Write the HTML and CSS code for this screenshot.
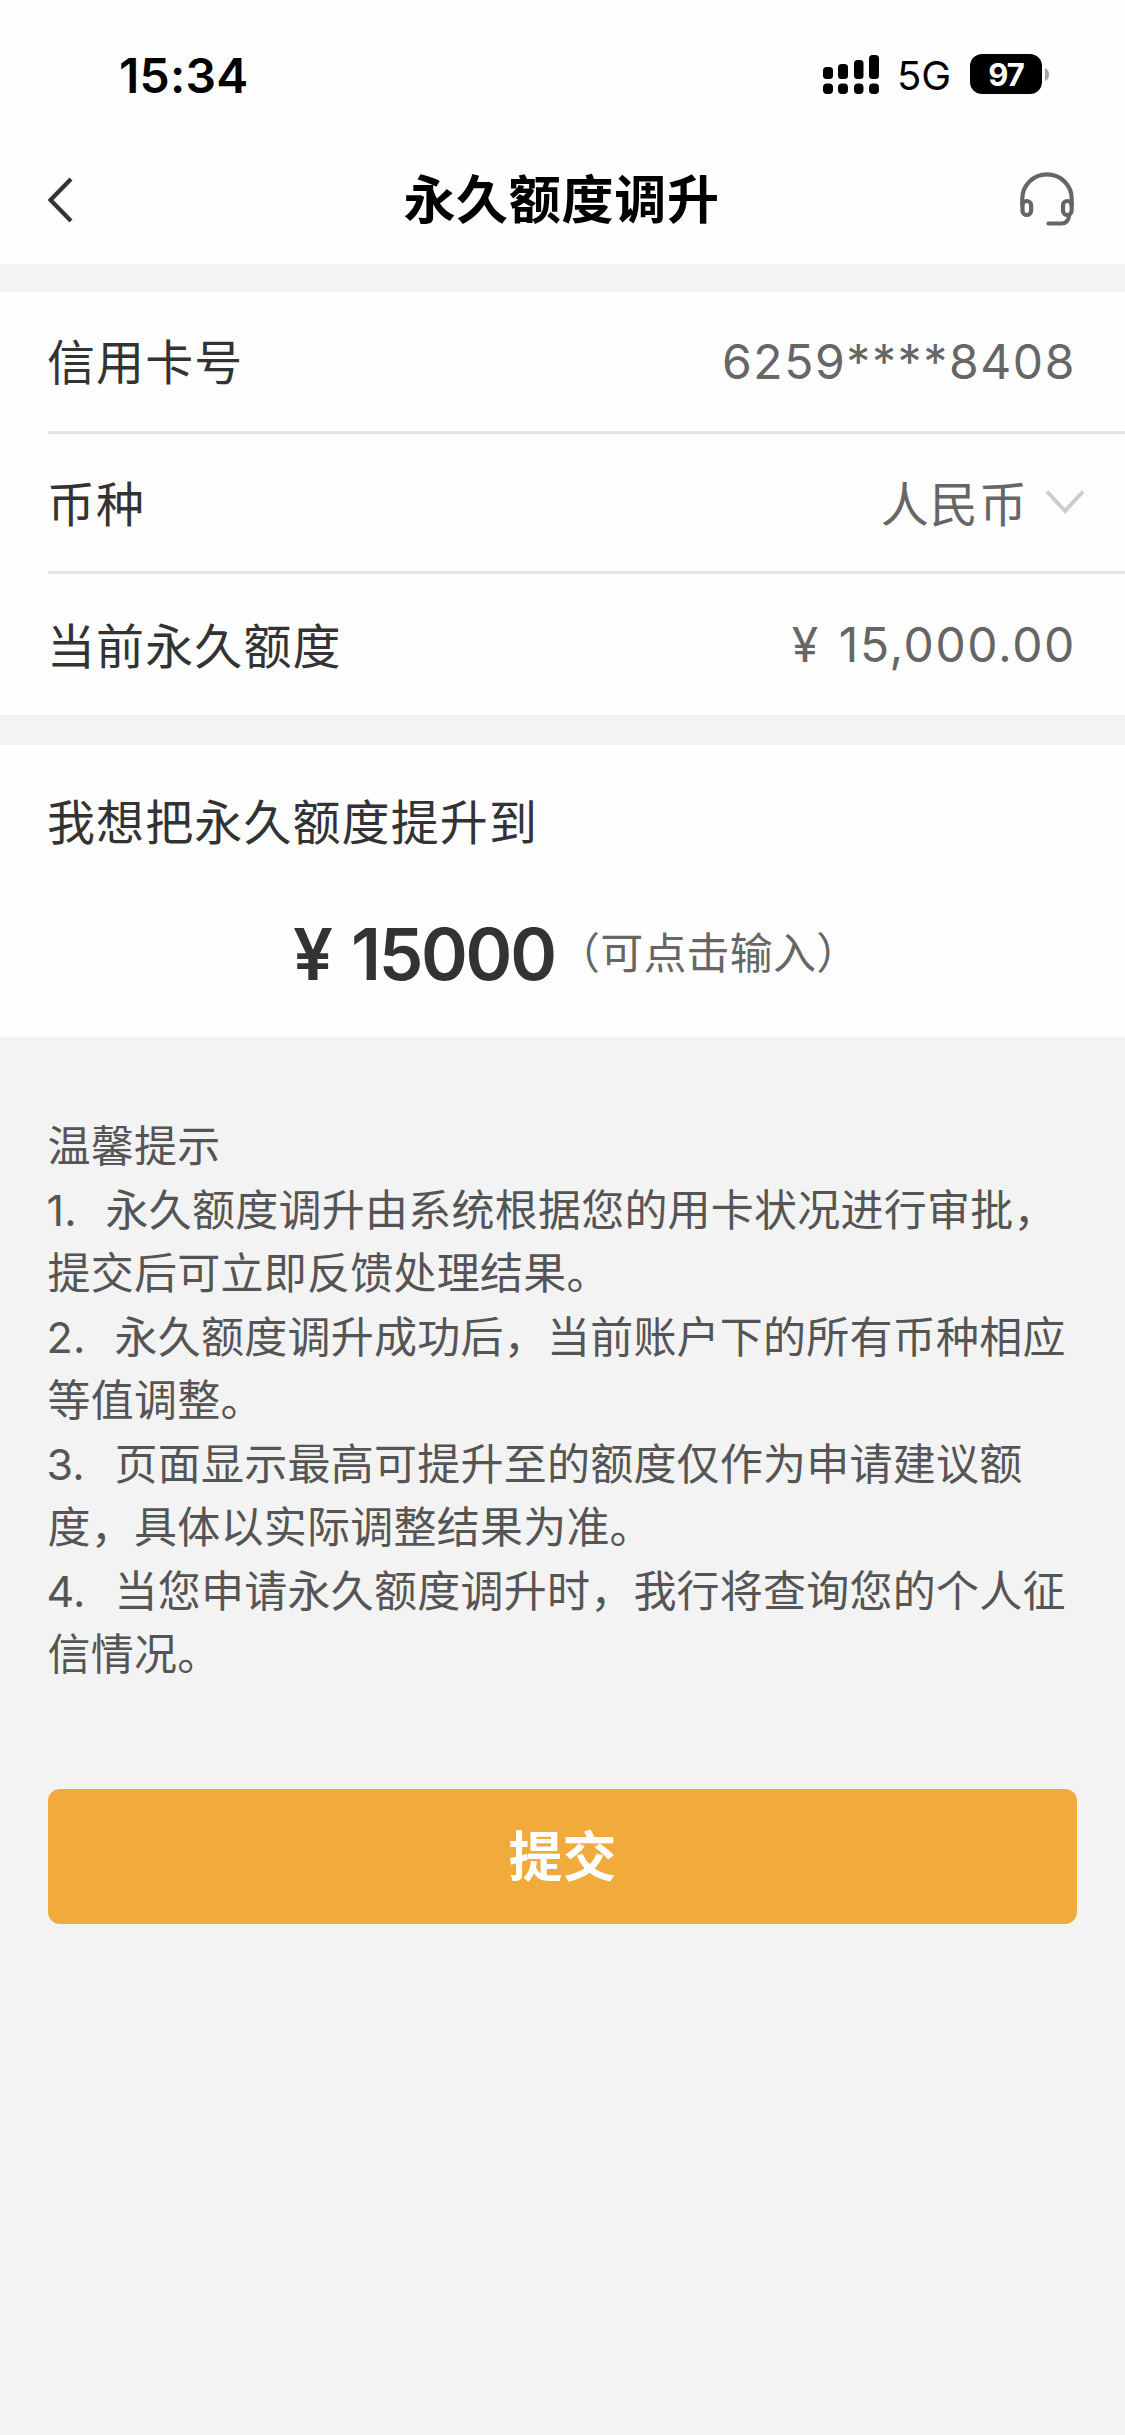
FILE: index.html
```html
<!DOCTYPE html>
<html lang="zh-CN">
<head>
<meta charset="utf-8">
<title>永久额度调升</title>
<link rel="stylesheet" href="styles.css">
</head>
<body>
<div class="status">
  <span class="time">15:34</span>
  <svg class="signal" width="56" height="40" viewBox="0 0 56 40">
    <rect x="0" y="13" width="10" height="12" rx="3.5"/><rect x="15" y="10" width="10" height="15" rx="3.5"/><rect x="31" y="6" width="9.5" height="19" rx="3.5"/><rect x="46" y="1" width="10" height="24" rx="3.5"/>
    <rect x="0" y="29.5" width="10" height="10.5" rx="4"/><rect x="15" y="29.5" width="10" height="10.5" rx="4"/><rect x="31" y="29.5" width="9.5" height="10.5" rx="4"/><rect x="46" y="29.5" width="10" height="10.5" rx="4"/>
  </svg>
  <span class="network">5G</span>
  <span class="battery">97</span>
  <svg class="nub" width="4" height="13" viewBox="0 0 4 13"><path d="M0 0Q4 1.5 4 6.5T0 13Z"/></svg>
</div>
<header class="nav">
  <svg class="back" width="26" height="46" viewBox="0 0 26 46"><path d="M24 2 3.5 23 24 44"/></svg>
  <h1 class="title">永久额度调升</h1>
  <svg class="service" width="54" height="54" viewBox="0 0 54 54">
    <path d="M2.3 33V26.5a24.7 24.2 0 0 1 49.4 0V33"/>
    <rect x="2.5" y="29" width="8.6" height="14" rx="4.3"/>
    <rect x="43" y="29" width="8.6" height="14" rx="4.3"/>
    <path d="M49 43C49 48.500 46 51.500 41.500 51.500H28.500"/>
  </svg>
</header>
<section class="list">
  <div class="row first"><span>信用卡号</span><span class="value card">6259****8408</span></div>
  <div class="row second"><span>币种</span><span class="value currency">人民币<svg class="down" width="40" height="28" viewBox="0 0 40 28"><path d="M2 2.500 20 22 38 2.500"/></svg></span></div>
  <div class="row third"><span>当前永久额度</span><span class="value money"><span class="yen">¥</span>15,000.00</span></div>
</section>
<section class="request">
  <p class="label">我想把永久额度提升到</p>
  <div class="entry"><span class="yen-large">¥</span><span class="amount">15000</span><span class="hint">（可点击输入）</span></div>
</section>
<section class="notes">
  <p>温馨提示</p>
  <p><span class="no one">1.</span>永久额度调升由系统根据您的用卡状况进行审批，<br>提交后可立即反馈处理结果。</p>
  <p><span class="no">2.</span>永久额度调升成功后，当前账户下的所有币种相应<br>等值调整。</p>
  <p><span class="no">3.</span>页面显示最高可提升至的额度仅作为申请建议额<br>度，具体以实际调整结果为准。</p>
  <p><span class="no">4.</span>当您申请永久额度调升时，我行将查询您的个人征<br>信情况。</p>
</section>
<button class="submit" type="button">提交</button>
</body>
</html>
```
FILE: styles.css
```css
* { box-sizing: border-box; margin: 0; padding: 0; }
body {
  background: #f3f3f3;
  color: #333;
  min-height: 2435px;
  font-family: "Noto Sans CJK SC", sans-serif;
}
svg { display: block; fill: none; flex: none; }
.status {
  height: 136px;
  background: #fefefe;
  color: #000;
  display: flex;
  align-items: flex-start;
  padding: 54px 0 0 119px;
  font-family: Inter, "Noto Sans CJK SC", sans-serif;
}
.time { width: 704px; font-size: 48px; font-weight: 600; line-height: 43px; letter-spacing: 0.200px; }
.signal { fill: #000; }
.network { width: 73px; margin-left: 18px; font-size: 40px; line-height: 44px; letter-spacing: 0; }
.battery {
  width: 72px;
  height: 40px;
  border-radius: 12px;
  background: #000;
  color: #fff;
  font-size: 31px;
  font-weight: 700;
  line-height: 41px;
  text-align: center;
  letter-spacing: -1px;
}
.nub { fill: #a5a5a5; margin: 14px 0 0 3px; }
.nav {
  height: 128px;
  background: #fefefe;
  display: grid;
  grid-template-columns: 100px 1fr 100px;
  align-items: start;
  padding: 36px 49px 0 47px;
}
.back { margin-top: 5px; stroke: #333; stroke-width: 4.2; }
.title { color: #000; font-size: 52px; font-weight: 700; line-height: 49px; letter-spacing: 0.700px; text-align: center; }
.service { justify-self: end; margin-right: 2px; stroke: #666; stroke-width: 4.2; stroke-linecap: round; }
.list { margin-top: 28px; padding-left: 48px; background: #fefefe; }
.row {
  display: flex;
  justify-content: space-between;
  align-items: center;
  padding-right: 49px;
  padding-bottom: 4px;
  font-size: 48px;
  line-height: 70px;
  letter-spacing: 1.100px;
  text-indent: -1px;
  border-bottom: 3px solid #e4e4e4;
}
.first { height: 142px; padding-bottom: 5px; }
.second { height: 140px; }
.third { height: 141px; border: 0; }
.value { color: #666; }
.card, .money { padding-top: 5px; font-family: Inter, "Noto Sans CJK SC", sans-serif; font-weight: 400; }
.card { letter-spacing: 1.600px; }
.money { letter-spacing: 1.600px; }
.currency { display: flex; align-items: center; }
.down { margin: 4px -9px 0 17px; stroke: #ccc; stroke-width: 4; }
.yen { margin-right: 19px; }
.request { margin-top: 30px; height: 292px; padding: 39px 48px 0; background: #fefefe; }
.label { font-size: 48px; line-height: 70px; letter-spacing: 1.100px; text-indent: -1px; }
.entry {
  display: flex;
  align-items: center;
  height: 100px;
  margin-top: 50px;
  padding-left: 245px;
  font-family: Inter, "Noto Sans CJK SC", sans-serif;
}
.yen-large, .amount { font-size: 71px; font-weight: 600; line-height: 100px; }
.yen-large { width: 58px; }
.amount { width: 206px; letter-spacing: -2.300px; }
.hint { margin-top: -9px; color: #666; font-family: "Noto Sans CJK SC", sans-serif; font-size: 43px; line-height: 62px; font-weight: 400; letter-spacing: 0.200px; }
.notes { padding: 75px 0 0 47.5px; color: #555; font-size: 43px; line-height: 63.5px; letter-spacing: 0.240px; white-space: nowrap; }
.no { display: inline-block; width: 67px; line-height: 0; font-family: Inter, sans-serif; text-indent: -1px; }
.one { width: 58px; }
.submit {
  display: block;
  width: 1029px;
  height: 135px;
  margin: 105.5px 0 0 48px;
  padding-bottom: 5px;
  border: 0;
  border-radius: 12px;
  background: #f1ab3c;
  color: #fff;
  font: 700 54px/130px "Noto Sans CJK SC", sans-serif;
}
```
